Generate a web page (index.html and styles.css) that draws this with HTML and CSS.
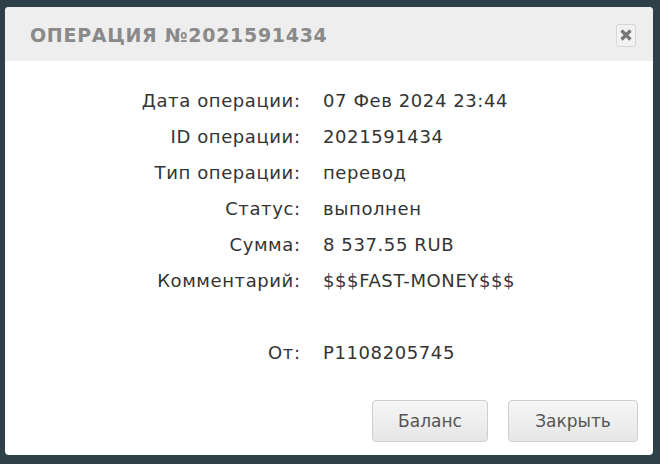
FILE: index.html
```html
<!DOCTYPE html>
<html lang="ru">
<head>
<meta charset="utf-8">
<link rel="stylesheet" href="styles.css">
</head>
<body>
<div class="dialog">
  <div class="header">
    <div class="title">ОПЕРАЦИЯ №2021591434</div>
    <button class="close" aria-label="Закрыть">
      <svg width="12" height="12" viewBox="0 0 12 12"><path d="M1.5 1.5 L10.5 10.5 M10.5 1.5 L1.5 10.5" stroke="#777777" stroke-width="3.2" stroke-linecap="butt"/></svg>
    </button>
  </div>
  <div class="body">
    <div class="info">
      <div class="label">Дата операции:</div><div class="value">07 Фев 2024 23:44</div>
      <div class="label">ID операции:</div><div class="value">2021591434</div>
      <div class="label">Тип операции:</div><div class="value">перевод</div>
      <div class="label">Статус:</div><div class="value">выполнен</div>
      <div class="label">Сумма:</div><div class="value">8 537.55 RUB</div>
      <div class="label">Комментарий:</div><div class="value">$$$FAST-MONEY$$$</div>
      <div class="label"></div><div class="value"></div>
      <div class="label">От:</div><div class="value">P1108205745</div>
    </div>
    <div class="actions">
      <button class="btn">Баланс</button>
      <button class="btn">Закрыть</button>
    </div>
  </div>
</div>
</body>
</html>
```

FILE: styles.css
```css
html, body {
  margin: 0;
  padding: 0;
  background: #2f3f47;
  width: 660px;
  height: 464px;
  overflow: hidden;
}
body {
  padding: 7px 7px 9px 5px;
  box-sizing: border-box;
}
.dialog {
  width: 648px;
  height: 448px;
  background: #ffffff;
  border-radius: 4px;
  overflow: hidden;
  display: flex;
  flex-direction: column;
}
.header {
  height: 54px;
  background: #eeeeee;
  display: flex;
  align-items: center;
  justify-content: space-between;
  padding: 0 17px 0 25px;
  box-sizing: border-box;
}
.title {
  font-family: "DejaVu Sans", sans-serif;
  font-size: 19px;
  font-weight: bold;
  letter-spacing: 0.7px;
  color: #8a8a8a;
  padding-top: 2px;
}
.close {
  width: 20px;
  height: 23px;
  padding: 0;
  margin-top: 2px;
  border: 1px solid #d6d6d6;
  border-radius: 3px;
  background: #f2f2f2;
  display: flex;
  align-items: center;
  justify-content: center;
}
.body {
  flex: 1;
  display: flex;
  flex-direction: column;
  padding: 22px 15px 13px 0;
}
.info {
  display: grid;
  grid-template-columns: 295px auto;
  column-gap: 23px;
  font-family: "DejaVu Sans", sans-serif;
  font-size: 18px;
  letter-spacing: 0.6px;
  color: #333333;
  line-height: 36px;
  grid-auto-rows: 36px;
}
.label {
  text-align: right;
  margin-right: -0.6px;
}
.actions {
  margin-top: auto;
  display: flex;
  justify-content: flex-end;
  gap: 20px;
}
.btn {
  height: 42px;
  border: 1px solid #cfcfcf;
  border-radius: 4px;
  background: linear-gradient(#f6f6f6, #e6e6e6);
  font-family: "DejaVu Sans", sans-serif;
  font-size: 17px;
  color: #555555;
  padding: 0;
}
.btn:first-child { width: 116px; }
.btn:last-child { width: 130px; }
```
